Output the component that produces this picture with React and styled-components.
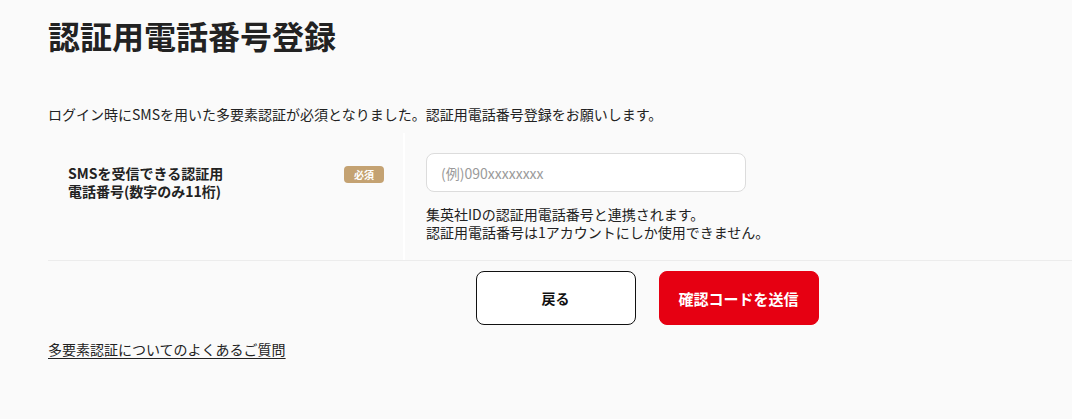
import React from 'react'
import styled, { createGlobalStyle } from 'styled-components'

const GlobalStyle = createGlobalStyle`
  body {
    margin: 0;
    background: #fafafa;
    color: #222;
    font-family: "Noto Sans CJK JP", "Noto Sans", sans-serif;
  }
`

const Wrapper = styled.div`
  width: 1198px;
  padding: 11px 0 40px 48px;
`
const Title = styled.h1`
  margin: 0;
  font-size: 32px;
  line-height: 48px;
  font-weight: 700;
  color: #222;
`
const Lead = styled.p`
  margin: 44px 0 0;
  font-size: 14px;
  line-height: 22px;
`
const FormTable = styled.div`
  margin-top: 8px;
  display: grid;
  grid-template-columns: 357px 1fr;
  border-bottom: 1px solid #ececec;
`
const HeadCell = styled.div`
  display: flex;
  justify-content: space-between;
  align-items: flex-start;
  padding: 31px 19px 20px 20px;
  border-right: 2px solid #fff;
`
const LabelText = styled.label`
  font-size: 14px;
  line-height: 18px;
  font-weight: 700;
`
const Badge = styled.span`
  margin-top: 2px;
  width: 40px;
  height: 17px;
  border-radius: 4px;
  background: #c4a272;
  color: #fff;
  font-size: 10px;
  font-weight: 700;
  line-height: 17px;
  text-align: center;
`
const BodyCell = styled.div`
  padding: 20px 21px 19px;
`
const Input = styled.input`
  display: block;
  box-sizing: border-box;
  width: 320px;
  height: 39px;
  padding: 0 14px;
  border: 1px solid #dcdcdc;
  border-radius: 8px;
  background: #fff;
  font-family: inherit;
  font-size: 14px;
  color: #222;
  &::placeholder {
    color: #9a9a9a;
  }
`
const Note = styled.p`
  margin: 13px 0 0;
  font-size: 14px;
  line-height: 18px;
`
const Buttons = styled.div`
  margin-top: 10px;
  display: flex;
  justify-content: center;
  gap: 23px;
`
const Button = styled.button`
  width: 160px;
  height: 54px;
  border-radius: 8px;
  font-family: inherit;
  font-size: ${props => props.primary ? '15px' : '14px'};
  font-weight: 700;
  cursor: pointer;
  border: 1px solid ${props => props.primary ? '#e60012' : '#111'};
  background: ${props => props.primary ? '#e60012' : '#fff'};
  color: ${props => props.primary ? '#fff' : '#111'};
`
const HelpLink = styled.a`
  display: inline-block;
  margin-top: 14px;
  font-size: 14px;
  line-height: 20px;
  color: #222;
  text-decoration: underline;
  text-underline-offset: 3px;
`

export default function App() {
  return (
    <Wrapper>
      <GlobalStyle />
      <Title>認証用電話番号登録</Title>
      <Lead>ログイン時にSMSを用いた多要素認証が必須となりました。認証用電話番号登録をお願いします。</Lead>
      <FormTable>
        <HeadCell>
          <LabelText htmlFor="tel">SMSを受信できる認証用<br />電話番号(数字のみ11桁)</LabelText>
          <Badge>必須</Badge>
        </HeadCell>
        <BodyCell>
          <Input id="tel" type="tel" placeholder="(例)090xxxxxxxx" />
          <Note>集英社IDの認証用電話番号と連携されます。<br />認証用電話番号は1アカウントにしか使用できません。</Note>
        </BodyCell>
      </FormTable>
      <Buttons>
        <Button>戻る</Button>
        <Button primary>確認コードを送信</Button>
      </Buttons>
      <HelpLink href="#">多要素認証についてのよくあるご質問</HelpLink>
    </Wrapper>
  )
}
